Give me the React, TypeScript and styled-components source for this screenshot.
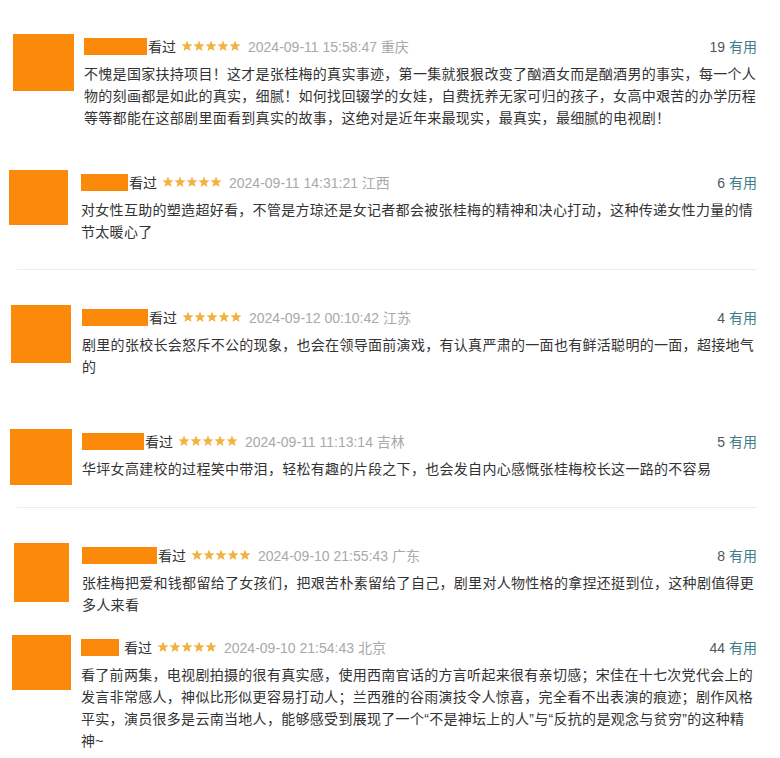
import styled, { createGlobalStyle } from "styled-components";

interface Review {
  shift: number,
  avatarW: number,
  avatarH: number,
  gap: number,
  nameW: number,
  nameGap: number,
  date: string,
  place: string,
  votes: number,
  height?: number,
  divider?: boolean,
  lines: string[],
}

const reviews: Review[] = [
  {
    shift: 13, avatarW: 61, avatarH: 57, gap: 10, nameW: 63, nameGap: 1,
    date: "2024-09-11 15:58:47", place: "重庆", votes: 19, height: 136,
    lines: [
      "不愧是国家扶持项目！这才是张桂梅的真实事迹，第一集就狠狠改变了酗酒女而是酗酒男的事实，每一个人",
      "物的刻画都是如此的真实，细腻！如何找回辍学的女娃，自费抚养无家可归的孩子，女高中艰苦的办学历程",
      "等等都能在这部剧里面看到真实的故事，这绝对是近年来最现实，最真实，最细腻的电视剧！",
    ],
  },
  {
    shift: 9, avatarW: 59, avatarH: 55, gap: 13, nameW: 47, nameGap: 1,
    date: "2024-09-11 14:31:21", place: "江西", votes: 6, height: 135, divider: true,
    lines: [
      "对女性互助的塑造超好看，不管是方琼还是女记者都会被张桂梅的精神和决心打动，这种传递女性力量的情",
      "节太暖心了",
    ],
  },
  {
    shift: 11, avatarW: 60, avatarH: 58, gap: 11, nameW: 66, nameGap: 1,
    date: "2024-09-12 00:10:42", place: "江苏", votes: 4, height: 124,
    lines: [
      "剧里的张校长会怒斥不公的现象，也会在领导面前演戏，有认真严肃的一面也有鲜活聪明的一面，超接地气",
      "的",
    ],
  },
  {
    shift: 10, avatarW: 62, avatarH: 56, gap: 10, nameW: 62, nameGap: 1,
    date: "2024-09-11 11:13:14", place: "吉林", votes: 5, height: 114, divider: true,
    lines: [
      "华坪女高建校的过程笑中带泪，轻松有趣的片段之下，也会发自内心感慨张桂梅校长这一路的不容易",
    ],
  },
  {
    shift: 14, avatarW: 55, avatarH: 59, gap: 13, nameW: 75, nameGap: 1,
    date: "2024-09-10 21:55:43", place: "广东", votes: 8, height: 92,
    lines: [
      "张桂梅把爱和钱都留给了女孩们，把艰苦朴素留给了自己，剧里对人物性格的拿捏还挺到位，这种剧值得更",
      "多人来看",
    ],
  },
  {
    shift: 12, avatarW: 59, avatarH: 55, gap: 10, nameW: 38, nameGap: 5,
    date: "2024-09-10 21:54:43", place: "北京", votes: 44,
    lines: [
      "看了前两集，电视剧拍摄的很有真实感，使用西南官话的方言听起来很有亲切感；宋佳在十七次党代会上的",
      "发言非常感人，神似比形似更容易打动人；兰西雅的谷雨演技令人惊喜，完全看不出表演的痕迹；剧作风格",
      "平实，演员很多是云南当地人，能够感受到展现了一个“不是神坛上的人”与“反抗的是观念与贫穷”的这种精",
      "神~",
    ],
  },
];

function Stars() {
  const star = "M6 0.6 L7.5 4.3 L11.5 4.5 L8.4 7 L9.5 11 L6 8.8 L2.5 11 L3.6 7 L0.5 4.5 L4.5 4.3 Z";
  return (
    <StarRow width="60" height="12" viewBox="0 0 60 12">
      {[0, 1, 2, 3, 4].map((i) => (
        <path key={i} d={star} transform={`translate(${i * 12} 0)`} fill="#f2b242" />
      ))}
    </StarRow>
  );
}

export default function App() {
  return (
    <>
      <GlobalStyle />
      <Page>
        {reviews.map((r, index) => (
          <Item key={index} $height={r.height}>
            <Row $shift={r.shift}>
              <Avatar $w={r.avatarW} $h={r.avatarH} />
              <Body $gap={r.gap}>
                <Header>
                  <Name $w={r.nameW} $gap={r.nameGap} />
                  <span>看过</span>
                  <Stars />
                  <Meta>{r.date} {r.place}</Meta>
                  <Votes>{r.votes} <Useful>有用</Useful></Votes>
                </Header>
                <Content>
                  {r.lines.map((line, i) => <Line key={i}>{line}</Line>)}
                </Content>
              </Body>
            </Row>
            {r.divider && <Divider />}
          </Item>
        ))}
      </Page>
    </>
  );
}

const GlobalStyle = createGlobalStyle`
  body {
    margin: 0;
    background: #ffffff;
    font-family: "Liberation Sans", "Noto Sans CJK SC", sans-serif;
  }
`;

const Page = styled.div`
  width: 780px;
  padding-top: 34px;
`;

const Item = styled.div<{ $height?: number }>`
  display: flex;
  flex-direction: column;
  height: ${(p) => (p.$height ? `${p.$height}px` : "auto")};
  padding-bottom: 35px;
  box-sizing: border-box;
`;

const Row = styled.div<{ $shift: number }>`
  display: flex;
  align-items: flex-start;
  padding-left: ${(p) => p.$shift}px;
  padding-right: 23px;
`;

const Avatar = styled.div<{ $w: number, $h: number }>`
  flex-shrink: 0;
  width: ${(p) => p.$w}px;
  height: ${(p) => p.$h}px;
  background: #fb8a0a;
`;

const Body = styled.div<{ $gap: number }>`
  flex: 1;
  min-width: 0;
  margin-left: ${(p) => p.$gap}px;
  padding-top: 2px;
`;

const Header = styled.div`
  display: flex;
  align-items: center;
  height: 20px;
  font-size: 14px;
  color: #333;
  white-space: nowrap;
`;

const Name = styled.div<{ $w: number, $gap: number }>`
  width: ${(p) => p.$w}px;
  height: 17px;
  margin-right: ${(p) => p.$gap}px;
  background: #fb8a0a;
`;

const StarRow = styled.svg`
  margin-left: 5px;
  flex-shrink: 0;
`;

const Meta = styled.span`
  margin-left: 7px;
  color: #a9a9a9;
`;

const Votes = styled.span`
  margin-left: auto;
  color: #555;
`;

const Useful = styled.span`
  color: #3f7d8c;
`;

const Content = styled.div`
  margin-top: 7px;
  font-size: 14px;
  line-height: 22px;
  letter-spacing: 0.3px;
  color: #333;
`;

const Line = styled.div`
  white-space: nowrap;
`;

const Divider = styled.div`
  margin-top: auto;
  margin-left: 17px;
  margin-right: 23px;
  height: 1px;
  background: #ececec;
`;
